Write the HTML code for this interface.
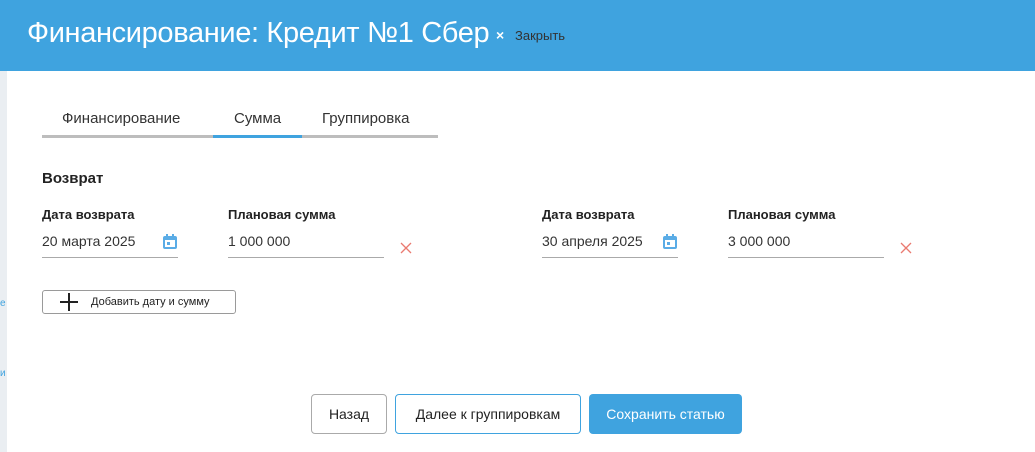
<!DOCTYPE html>
<html><head><meta charset="utf-8"><style>
*{margin:0;padding:0;box-sizing:border-box}
body{width:1035px;height:452px;position:relative;background:#fff;font-family:"Liberation Sans",sans-serif;color:#222;overflow:hidden}
.a{position:absolute;white-space:nowrap}
.hdr{left:0;top:0;width:1035px;height:71px;background:#3fa3df}
.strip{left:0;top:71px;width:7px;height:381px;background:#eaeef2}
.lbl{font-size:13px;font-weight:bold;color:#222}
.val{font-size:14px;color:#333}
.ln{height:1px;background:#aaa}
.btn{border-radius:4px;font-size:14px;display:flex;align-items:center;justify-content:center}
</style></head><body>
<div class="a hdr"></div>
<div class="a" style="left:27px;top:17px;font-size:29px;color:#fff;letter-spacing:-0.35px">Финансирование: Кредит №1 Сбер</div>
<div class="a" style="left:496px;top:27px;font-size:14px;color:#fff;font-weight:bold">×</div>
<div class="a" style="left:515px;top:28px;font-size:13px;color:#333">Закрыть</div>
<div class="a strip"></div>
<div class="a" style="left:0;top:298px;font-size:10px;color:#3fa3df">е</div>
<div class="a" style="left:0;top:368px;font-size:10px;color:#3fa3df">и</div>

<div class="a" style="left:62px;top:110px;font-size:15px;color:#333">Финансирование</div>
<div class="a" style="left:234px;top:110px;font-size:15px;color:#333">Сумма</div>
<div class="a" style="left:322px;top:110px;font-size:15px;color:#333">Группировка</div>
<div class="a" style="left:42px;top:135px;width:396px;height:3px;background:#bdbdbd"></div>
<div class="a" style="left:213px;top:135px;width:89px;height:3px;background:#3fa3df"></div>

<div class="a" style="left:42px;top:170px;font-size:15px;font-weight:bold;color:#222">Возврат</div>

<div class="a lbl" style="left:42px;top:207px">Дата возврата</div>
<div class="a lbl" style="left:228px;top:207px">Плановая сумма</div>
<div class="a val" style="left:42px;top:233px">20 марта 2025</div>
<div class="a val" style="left:228px;top:233px">1 000 000</div>
<div class="a ln" style="left:42px;top:257px;width:136px"></div>
<div class="a ln" style="left:228px;top:257px;width:156px"></div>

<div class="a lbl" style="left:542px;top:207px">Дата возврата</div>
<div class="a lbl" style="left:728px;top:207px">Плановая сумма</div>
<div class="a val" style="left:542px;top:233px">30 апреля 2025</div>
<div class="a val" style="left:728px;top:233px">3 000 000</div>
<div class="a ln" style="left:542px;top:257px;width:136px"></div>
<div class="a ln" style="left:728px;top:257px;width:156px"></div>

<svg class="a" style="left:162px;top:234px" width="16" height="16" viewBox="0 0 16 16"><rect x="1" y="2" width="14" height="13" rx="2" fill="#5aace6"/><rect x="3" y="6" width="10" height="7" fill="#fff"/><rect x="4" y="0" width="2" height="4" fill="#5aace6"/><rect x="10" y="0" width="2" height="4" fill="#5aace6"/><rect x="5" y="8" width="3" height="3" fill="#5aace6"/></svg>
<svg class="a" style="left:662px;top:234px" width="16" height="16" viewBox="0 0 16 16"><rect x="1" y="2" width="14" height="13" rx="2" fill="#5aace6"/><rect x="3" y="6" width="10" height="7" fill="#fff"/><rect x="4" y="0" width="2" height="4" fill="#5aace6"/><rect x="10" y="0" width="2" height="4" fill="#5aace6"/><rect x="5" y="8" width="3" height="3" fill="#5aace6"/></svg>
<svg class="a" style="left:400px;top:242px" width="12" height="12"><path d="M1 1L11 11M11 1L1 11" stroke="#ea7a70" stroke-width="1.3"/></svg>
<svg class="a" style="left:900px;top:242px" width="12" height="12"><path d="M1 1L11 11M11 1L1 11" stroke="#ea7a70" stroke-width="1.3"/></svg>

<div class="a" style="left:42px;top:290px;width:194px;height:24px;border:1px solid #9a9a9a;border-radius:3px"></div>
<svg class="a" style="left:60px;top:293px" width="18" height="18"><path d="M9 0V18M0 9H18" stroke="#222" stroke-width="2"/></svg>
<div class="a" style="left:91px;top:296px;font-size:11px;color:#222">Добавить дату и сумму</div>

<div class="a btn" style="left:311px;top:394px;width:76px;height:40px;border:1px solid #aaa;color:#222">Назад</div>
<div class="a btn" style="left:395px;top:394px;width:186px;height:40px;border:1px solid #3fa3df;color:#222">Далее к группировкам</div>
<div class="a btn" style="left:589px;top:394px;width:153px;height:40px;background:#3fa3df;color:#fff">Сохранить статью</div>
</body></html>
